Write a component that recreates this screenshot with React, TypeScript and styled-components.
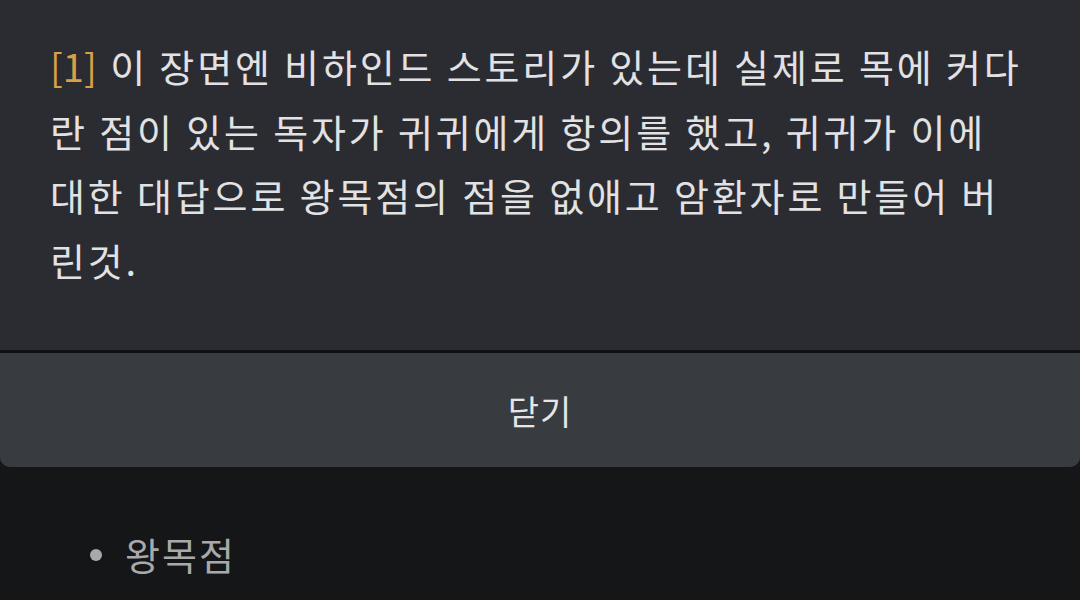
import styled, { createGlobalStyle } from "styled-components";

const GlobalStyle = createGlobalStyle`
	html, body {
		margin: 0;
		padding: 0;
		background: #151618;
	}
	body {
		font-family: "Noto Sans CJK KR", "Noto Sans", sans-serif;
	}
`;

const App = () => {
	return (
		<>
			<GlobalStyle />
			<StyledPage>
				<StyledDialog>
					<StyledBody>
						<StyledNote>
							<StyledRef>[1]</StyledRef> 이 장면엔 비하인드 스토리가 있는데 실제로 목에 커다란 점이 있는 독자가 귀귀에게 항의를 했고, 귀귀가 이에 대한 대답으로 왕목점의 점을 없애고 암환자로 만들어 버린것.
						</StyledNote>
					</StyledBody>
					<StyledCloseButton type="button">닫기</StyledCloseButton>
				</StyledDialog>
				<StyledList>
					<StyledItem>왕목점</StyledItem>
				</StyledList>
			</StyledPage>
		</>
	);
};

export default App;

const StyledPage = styled.div`
	width: 1080px;
	height: 600px;
	overflow: hidden;
	background: #151618;
`;

const StyledDialog = styled.div`
	display: flex;
	flex-direction: column;
	background: #2b2c31;
	border-radius: 0 0 10px 10px;
	overflow: hidden;
`;

const StyledBody = styled.div`
	height: 353px;
	box-sizing: border-box;
	padding: 34px 46px 0 50px;
	border-bottom: 3px solid #0f1013;
`;

const StyledNote = styled.p`
	margin: 0;
	font-size: 38px;
	line-height: 64.5px;
	color: #e2e2e4;
	letter-spacing: 2.85px;
`;

const StyledRef = styled.span`
	color: #d9a044;
	letter-spacing: 0;
	margin-right: 2px;
`;

const StyledCloseButton = styled.button`
	height: 114px;
	border: none;
	background: #383b40;
	color: #e6e6e8;
	font-family: "Noto Sans CJK KR", "Noto Sans", sans-serif;
	font-size: 34px;
	letter-spacing: 1px;
	padding: 0;
	cursor: pointer;
`;

const StyledList = styled.ul`
	margin: 0;
	padding: 52px 0 0 125px;
	list-style: none;
`;

const StyledItem = styled.li`
	position: relative;
	font-size: 38px;
	line-height: 70px;
	letter-spacing: 2px;
	color: #a9a9ab;

	&::before {
		content: "";
		position: absolute;
		left: -35px;
		top: 30px;
		width: 12px;
		height: 12px;
		border-radius: 50%;
		background: #a9a9ab;
	}
`;
